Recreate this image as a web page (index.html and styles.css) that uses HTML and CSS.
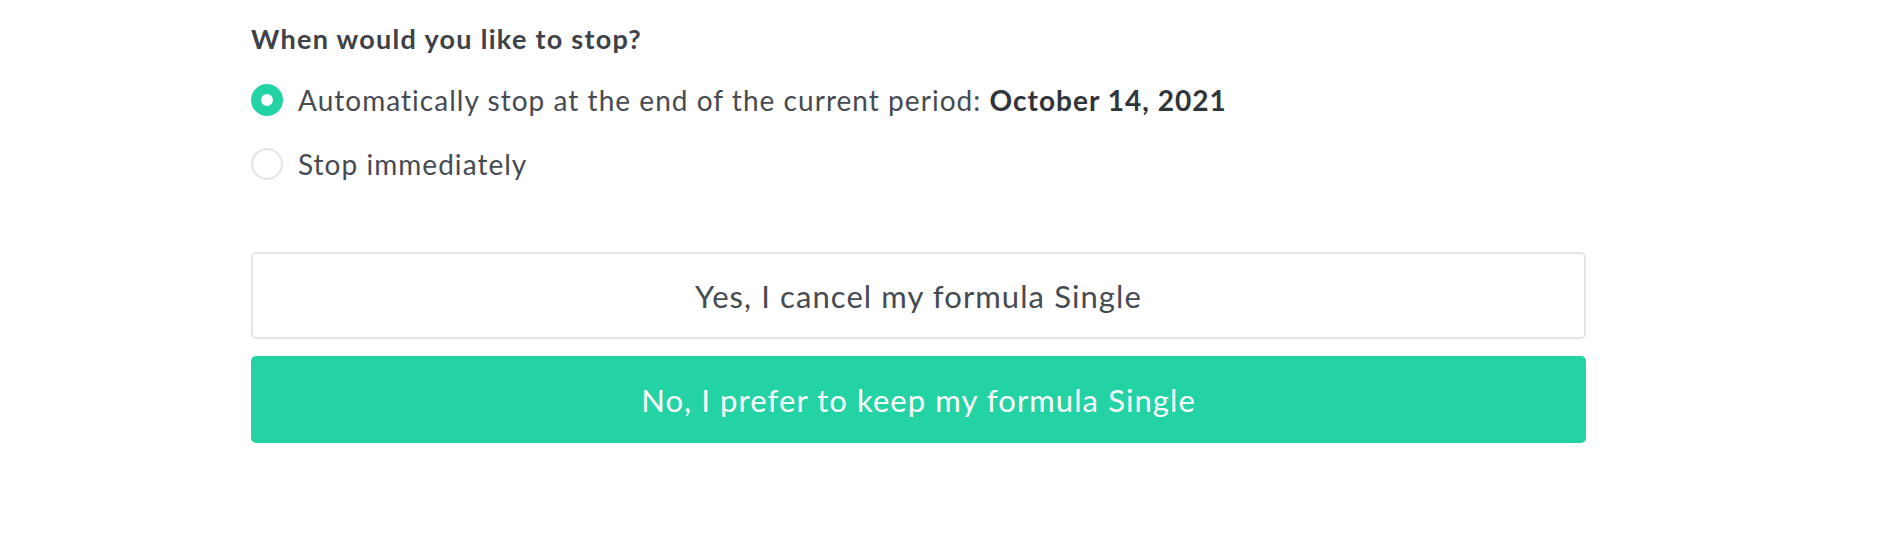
FILE: index.html
```html
<!DOCTYPE html>
<html lang="en">
<head>
<meta charset="utf-8">
<title>Cancel formula</title>
<link rel="stylesheet" href="styles.css">
</head>
<body>
<main class="page">
  <section class="panel">
    <h2 class="question">When would you like to stop?</h2>
    <div class="options">
      <label class="option">
        <span class="radio radio--checked"></span>
        <span class="option-text">Automatically stop at the end of the current period: <strong>October 14, 2021</strong></span>
      </label>
      <label class="option">
        <span class="radio"></span>
        <span class="option-text">Stop immediately</span>
      </label>
    </div>
    <div class="actions">
      <button class="btn btn--outline" type="button">Yes, I cancel my formula Single</button>
      <button class="btn btn--primary" type="button">No, I prefer to keep my formula Single</button>
    </div>
  </section>
</main>
</body>
</html>
```

FILE: styles.css
```css
html, body {
  margin: 0;
  padding: 0;
  background: #ffffff;
}

body {
  font-family: Lato, "Open Sans", "Liberation Sans", sans-serif;
  color: #464a51;
  letter-spacing: 0.035em;
}

.page {
  padding: 23px 0 0 251px;
}

.panel {
  width: 1335px;
}

.question {
  margin: 0;
  font-size: 27px;
  line-height: 32px;
  font-weight: 700;
  letter-spacing: 0.048em;
  color: #3d4148;
}

.options {
  display: flex;
  flex-direction: column;
  gap: 32px;
  margin-top: 29px;
}

.option {
  display: flex;
  align-items: center;
  gap: 15px;
  height: 32px;
}

.radio {
  box-sizing: border-box;
  flex: 0 0 32px;
  width: 32px;
  height: 32px;
  border-radius: 50%;
  border: 2px solid #e3e5ea;
  background: #ffffff;
}

.radio--checked {
  border: 10px solid #24d3a3;
}

.option-text {
  font-size: 28px;
  line-height: 32px;
  letter-spacing: 0.037em;
  color: #464a51;
}

.option-text strong {
  font-weight: 700;
  color: #30343b;
}

.actions {
  display: flex;
  flex-direction: column;
  gap: 17px;
  margin-top: 72px;
}

.btn {
  box-sizing: border-box;
  width: 100%;
  height: 87px;
  border-radius: 5px;
  font-family: inherit;
  font-size: 31px;
  letter-spacing: 0.035em;
  cursor: pointer;
}

.btn--outline {
  background: #ffffff;
  border: 2px solid #e3e5eb;
  color: #464a51;
}

.btn--primary {
  background: #24d3a3;
  border: none;
  color: #ffffff;
}
```
